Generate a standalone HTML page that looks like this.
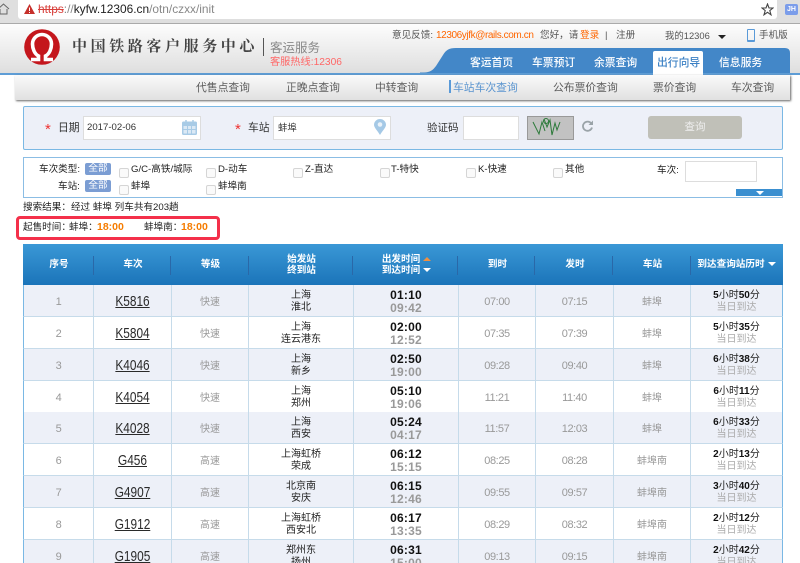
<!DOCTYPE html>
<html lang="zh"><head><meta charset="utf-8"><title>车站车次查询</title>
<style>
html,body{margin:0;padding:0;width:800px;height:563px;overflow:hidden;background:#fff}
body{position:relative;font-family:"Liberation Sans","Noto Sans CJK SC",sans-serif;font-size:10px;color:#333;filter:blur(.35px)}
.a,.t{position:absolute}
.t{white-space:nowrap;line-height:14px}
.nav{color:#fff;font-size:10.8px;font-weight:500;top:56px}
.sub{color:#5c5c5c;font-size:10.8px;top:81px}
.f{font-size:9.6px;color:#222}
.cb{position:absolute;width:8px;height:8px;border:1px solid #d5d5d5;border-radius:2px;background:#fafafa}
.badge{position:absolute;left:85px;width:26px;height:12px;line-height:12px;background:#7b9dd3;color:#fff;border-radius:2px;text-align:center;font-size:9.6px}
.th{position:absolute;top:244px;height:41px;display:flex;align-items:center;justify-content:center;text-align:center;color:#fff;font-weight:700;font-size:9.6px;line-height:11px}
.sep{position:absolute;top:256px;width:1px;height:19px;background:#2a68a8}
.tri{display:inline-block;width:0;height:0;border:4px solid transparent;border-top:4px solid #fff;border-bottom:0;vertical-align:1px;margin-left:3px}
.triu{display:inline-block;width:0;height:0;border:4px solid transparent;border-bottom:4px solid #f09040;border-top:0;vertical-align:1px;margin-left:3px}
.r{position:absolute;left:23px;width:760px;height:32px;box-sizing:border-box;border-left:1px solid #7ab8e4;border-right:1px solid #7ab8e4;border-bottom:1px solid #c6dbea;display:flex}
.r>div{box-sizing:border-box;border-right:1px solid #c6dbea;text-align:center;display:flex;flex-direction:column;justify-content:center;height:31px;padding-top:2px;color:#999;font-size:10px}
.r>div:last-child{border-right:0}
.r>.c3,.r>.c8{padding-top:0}
.o{background:#edf0f8}.e{background:#fff}
.c1{width:70px}.c2{width:78px}.c3{width:77px}.c4{width:105px}.c5{width:105px}.c6{width:77px}.c7{width:78px}.c8{width:77px}.c9{width:91px}
.r .n{font-size:11px;letter-spacing:-.4px}
.r .c2 span{display:inline-block;color:#2a2a2a;font-size:15px;text-decoration:underline;transform:scaleX(.79);line-height:16px}
.r .c4{color:#222;line-height:11.5px}
.r .c5{line-height:13px;font-size:12px;font-weight:700;color:#111;letter-spacing:.2px}
.r .c5 i{font-style:normal;color:#999}
.r .c9{color:#aaa;line-height:11.5px}
.r .c9 b{color:#111;font-weight:700}
.r .c9 u{text-decoration:none;font-weight:400;color:#222}
</style></head><body>

<!-- browser chrome -->
<div class="a" style="left:0;top:0;width:800px;height:23px;background:#dfdfdf;border-bottom:1px solid #aaa"></div>
<div class="a" style="left:18px;top:0;width:759px;height:19px;background:#fff;border-radius:0 0 3px 3px"></div>
<svg class="a" style="left:0;top:3px" width="10" height="12"><path d="M-2 6 L3.5 1 L9 6 M0 6 V11 H7 V6" fill="none" stroke="#666" stroke-width="1"/></svg>
<svg class="a" style="left:24px;top:4px" width="11" height="10"><path d="M5.5 0 L11 10 H0 Z" fill="#c6302b"/><rect x="5" y="3.5" width="1" height="3.5" fill="#fff"/><rect x="5" y="8" width="1" height="1" fill="#fff"/></svg>
<div class="t" style="left:38px;top:2px;font-size:11.9px;color:#888"><span style="color:#d8413c;text-decoration:line-through">https</span>://<span style="color:#222">kyfw.12306.cn</span>/otn/czxx/init</div>
<svg class="a" style="left:761px;top:3px" width="13" height="13"><path d="M6.5 1 L8 5 H12 L8.8 7.6 L10 11.8 L6.5 9.3 L3 11.8 L4.2 7.6 L1 5 H5 Z" fill="none" stroke="#444" stroke-width="1.1"/></svg>
<div class="a" style="left:785px;top:4px;width:13px;height:11px;background:#7b9dea;border-radius:2px;color:#fff;font-size:7px;font-weight:700;line-height:11px;text-align:center">JH</div>

<!-- site header -->
<div class="a" style="left:0;top:24px;width:800px;height:49px;background:linear-gradient(#fdfdfd,#dedede)"></div>
<div class="a" style="left:0;top:73px;width:800px;height:2px;background:#5e9dd6"></div>
<svg class="a" style="left:24px;top:29px" width="36" height="36" viewBox="0 0 36 36"><circle cx="18" cy="18" r="17.8" fill="#c4161c"/><path d="M7 30.5 H14.5 V27 C10.5 25 8.5 19.5 8.5 15 A9.5 9.5 0 0 1 27.5 15 C27.5 19.5 25.5 25 21.5 27 V30.5 H29" fill="none" stroke="#fff" stroke-width="3.6"/></svg>
<div class="t" style="left:72px;top:39px;font-size:15px;font-weight:700;letter-spacing:3.6px;color:#444;line-height:16px;font-family:'Liberation Serif','Noto Serif CJK SC',serif">中国铁路客户服务中心</div>
<div class="a" style="left:263px;top:38px;width:1px;height:18px;background:#555"></div>
<div class="t" style="left:270px;top:41px;font-size:12.5px;color:#888">客运服务</div>
<div class="t" style="left:270px;top:56px;font-size:10.2px;color:#f66">客服热线:12306</div>

<div class="t" style="left:392px;top:29px;font-size:9.6px;color:#555">意见反馈:</div>
<div class="t" style="left:436px;top:29px;font-size:10px;letter-spacing:-.4px;color:#f60">12306yjfk@rails.com.cn</div>
<div class="t" style="left:540px;top:29px;font-size:9.6px;color:#555">您好，请</div>
<div class="t" style="left:580px;top:29px;font-size:9.6px;color:#f60">登录</div>
<div class="t" style="left:605px;top:29px;font-size:9.6px;color:#555">|</div>
<div class="t" style="left:616px;top:29px;font-size:9.6px;color:#555">注册</div>
<div class="t" style="left:665px;top:29px;font-size:9.4px;color:#555">我的12306</div>
<div class="a" style="left:718px;top:35px;width:0;height:0;border:4px solid transparent;border-top:4px solid #222;border-bottom:0"></div>
<div class="a" style="left:747px;top:29px;width:6px;height:10px;border:1px solid #5a9ad8;border-bottom-width:2px;border-radius:1px"></div>
<div class="t" style="left:759px;top:29px;font-size:9.6px;color:#555">手机版</div>

<svg class="a" style="left:420px;top:48px" width="370" height="26"><path d="M0 24.5 H4 C10 24.5 13 22 16 18 L23 7 C26 2 29 0 36 0 H365 Q370 0 370 5 V25 H0 Z" fill="#4387c8"/></svg>
<div class="t nav" style="left:470px">客运首页</div>
<div class="t nav" style="left:532px">车票预订</div>
<div class="t nav" style="left:594px">余票查询</div>
<div class="a" style="left:653px;top:51px;width:50px;height:24px;background:#fff;border-radius:2px 2px 0 0"></div>
<div class="t nav" style="left:657px;color:#3b80c4">出行向导</div>
<div class="t nav" style="left:719px">信息服务</div>

<!-- sub nav -->
<div class="a" style="left:15px;top:75px;width:775px;height:25px;background:linear-gradient(#fafafa,#e0e0e0);box-shadow:1px 1px 2px #666"></div>
<div class="t sub" style="left:196px">代售点查询</div>
<div class="t sub" style="left:286px">正晚点查询</div>
<div class="t sub" style="left:375px">中转查询</div>
<div class="a" style="left:449px;top:80px;width:2px;height:13px;background:#5a9ad8"></div>
<div class="t sub" style="left:453px;color:#5a94cf">车站车次查询</div>
<div class="t sub" style="left:553px">公布票价查询</div>
<div class="t sub" style="left:653px">票价查询</div>
<div class="t sub" style="left:731px">车次查询</div>

<!-- search -->
<div class="a" style="left:23px;top:106px;width:758px;height:42px;background:#edf0f8;border:1px solid #7ab8e4;border-radius:2px"></div>
<div class="t" style="left:45px;top:123px;font-size:15px;color:#e33">*</div>
<div class="t" style="left:58px;top:121px;font-size:10.8px">日期</div>
<div class="a" style="left:83px;top:116px;width:116px;height:22px;background:#fff;border:1px solid #ddd"></div>
<div class="t" style="left:87px;top:121px;font-size:9.6px;color:#333">2017-02-06</div>
<svg class="a" style="left:182px;top:120px" width="15" height="15"><rect x="0" y="1.5" width="15" height="13.5" rx="1.5" fill="#a8cbe6"/><rect x="1.5" y="6" width="12" height="7.5" fill="#dbe9f5"/><path d="M5.5 6V13.5M9.5 6V13.5M1.5 9.5H13.5" stroke="#a8cbe6"/><path d="M4 0V3M11 0V3" stroke="#a8cbe6" stroke-width="1.5"/></svg>
<div class="t" style="left:235px;top:123px;font-size:15px;color:#e33">*</div>
<div class="t" style="left:248px;top:121px;font-size:10.8px">车站</div>
<div class="a" style="left:273px;top:116px;width:116px;height:22px;background:#fff;border:1px solid #ddd"></div>
<div class="t" style="left:278px;top:121px;font-size:9.4px;color:#333">蚌埠</div>
<svg class="a" style="left:374px;top:119px" width="12" height="16"><path d="M6 16 C3 11 0 8.5 0 5.8 A6 5.8 0 0 1 12 5.8 C12 8.5 9 11 6 16 Z" fill="#a5c9e6"/><circle cx="6" cy="5.5" r="2.3" fill="#eaf2f9"/></svg>
<div class="t" style="left:427px;top:121px;font-size:10.5px">验证码</div>
<div class="a" style="left:463px;top:116px;width:54px;height:22px;background:#fff;border:1px solid #ddd"></div>
<div class="a" style="left:527px;top:116px;width:45px;height:22px;background:#c2c2c2;border:1px solid #999"></div>
<svg class="a" style="left:531px;top:116px" width="32" height="22"><path d="M2 6 L8 18 L11 6 L14 15 M13 3 L16 11 L19 4 L21 19 L24 7 L26 14 L29 6" fill="none" stroke="#2c7a3a" stroke-width="1"/><circle cx="15" cy="5" r="2.5" fill="none" stroke="#2c7a3a"/></svg>
<svg class="a" style="left:581px;top:120px" width="13" height="13"><path d="M10.3 3.5 A4.6 4.6 0 1 0 11 7.5" fill="none" stroke="#9aa3a8" stroke-width="1.8"/><path d="M12 0.5 V5 H7.5 Z" fill="#9aa3a8"/></svg>
<div class="a" style="left:648px;top:116px;width:94px;height:23px;line-height:23px;background:#c0c0b8;border-radius:3px;color:#eee;text-align:center;font-size:10.5px">查询</div>

<!-- filter -->
<div class="a" style="left:23px;top:157px;width:758px;height:39px;background:#fff;border:1px solid #8bbde4"></div>
<div class="t f" style="left:39px;top:163px">车次类型:</div>
<div class="badge" style="top:163px">全部</div>
<div class="cb" style="left:119px;top:168px"></div><div class="t f" style="left:131px;top:163px">G/C-高铁/城际</div>
<div class="cb" style="left:206px;top:168px"></div><div class="t f" style="left:218px;top:163px">D-动车</div>
<div class="cb" style="left:293px;top:168px"></div><div class="t f" style="left:305px;top:163px">Z-直达</div>
<div class="cb" style="left:380px;top:168px"></div><div class="t f" style="left:391px;top:163px">T-特快</div>
<div class="cb" style="left:466px;top:168px"></div><div class="t f" style="left:478px;top:163px">K-快速</div>
<div class="cb" style="left:553px;top:168px"></div><div class="t f" style="left:565px;top:163px">其他</div>
<div class="t f" style="left:657px;top:164px">车次:</div>
<div class="a" style="left:685px;top:161px;width:70px;height:19px;background:#fff;border:1px solid #ddd"></div>
<div class="t f" style="left:58px;top:180px">车站:</div>
<div class="badge" style="top:180px">全部</div>
<div class="cb" style="left:119px;top:185px"></div><div class="t f" style="left:131px;top:180px">蚌埠</div>
<div class="cb" style="left:206px;top:185px"></div><div class="t f" style="left:218px;top:180px">蚌埠南</div>
<div class="a" style="left:736px;top:189px;width:46px;height:7px;background:#3a8fd0"></div>
<div class="a" style="left:756px;top:191px;width:0;height:0;border:4px solid transparent;border-top:4px solid #fff;border-bottom:0"></div>

<!-- result -->
<div class="t f" style="left:23px;top:201px">搜索结果：经过 蚌埠 列车共有203趟</div>
<div class="a" style="left:16px;top:216px;width:198px;height:18px;border:3px solid #f4304a;border-radius:4px"></div>
<div class="t f" style="left:23px;top:221px">起售时间：</div>
<div class="t f" style="left:69px;top:221px">蚌埠：</div>
<div class="t" style="left:97px;top:220px;font-size:10.5px;font-weight:700;color:#f57c00">18:00</div>
<div class="t f" style="left:144px;top:221px">蚌埠南：</div>
<div class="t" style="left:181px;top:220px;font-size:10.5px;font-weight:700;color:#f57c00">18:00</div>

<!-- table head -->
<div class="a" style="left:23px;top:244px;width:760px;height:41px;background:linear-gradient(#3a98d6,#1b74b9)"></div>
<div class="th" style="left:24px;width:70px">序号</div>
<div class="th" style="left:94px;width:78px">车次</div>
<div class="th" style="left:172px;width:77px">等级</div>
<div class="th" style="left:249px;width:105px"><div>始发站<br>终到站</div></div>
<div class="th" style="left:354px;width:105px"><div>出发时间<span class="triu"></span><br>到达时间<span class="tri"></span></div></div>
<div class="th" style="left:459px;width:77px">到时</div>
<div class="th" style="left:536px;width:78px">发时</div>
<div class="th" style="left:614px;width:77px">车站</div>
<div class="th" style="left:691px;width:91px"><div>到达查询站历时<span class="tri"></span></div></div>
<div class="sep" style="left:93px"></div><div class="sep" style="left:170px"></div><div class="sep" style="left:248px"></div><div class="sep" style="left:352px"></div><div class="sep" style="left:457px"></div><div class="sep" style="left:534px"></div><div class="sep" style="left:612px"></div><div class="sep" style="left:690px"></div>

<!-- rows -->
<div class="r o" style="top:285px"><div class="c1 n">1</div><div class="c2"><span>K5816</span></div><div class="c3">快速</div><div class="c4">上海<br>淮北</div><div class="c5">01:10<br><i>09:42</i></div><div class="c6 n">07:00</div><div class="c7 n">07:15</div><div class="c8">蚌埠</div><div class="c9"><span><b>5</b><u>小时</u><b>50</b><u>分</u></span><span>当日到达</span></div></div>
<div class="r e" style="top:317px"><div class="c1 n">2</div><div class="c2"><span>K5804</span></div><div class="c3">快速</div><div class="c4">上海<br>连云港东</div><div class="c5">02:00<br><i>12:52</i></div><div class="c6 n">07:35</div><div class="c7 n">07:39</div><div class="c8">蚌埠</div><div class="c9"><span><b>5</b><u>小时</u><b>35</b><u>分</u></span><span>当日到达</span></div></div>
<div class="r o" style="top:349px"><div class="c1 n">3</div><div class="c2"><span>K4046</span></div><div class="c3">快速</div><div class="c4">上海<br>新乡</div><div class="c5">02:50<br><i>19:00</i></div><div class="c6 n">09:28</div><div class="c7 n">09:40</div><div class="c8">蚌埠</div><div class="c9"><span><b>6</b><u>小时</u><b>38</b><u>分</u></span><span>当日到达</span></div></div>
<div class="r e" style="top:381px"><div class="c1 n">4</div><div class="c2"><span>K4054</span></div><div class="c3">快速</div><div class="c4">上海<br>郑州</div><div class="c5">05:10<br><i>19:06</i></div><div class="c6 n">11:21</div><div class="c7 n">11:40</div><div class="c8">蚌埠</div><div class="c9"><span><b>6</b><u>小时</u><b>11</b><u>分</u></span><span>当日到达</span></div></div>
<div class="r o" style="top:412px"><div class="c1 n">5</div><div class="c2"><span>K4028</span></div><div class="c3">快速</div><div class="c4">上海<br>西安</div><div class="c5">05:24<br><i>04:17</i></div><div class="c6 n">11:57</div><div class="c7 n">12:03</div><div class="c8">蚌埠</div><div class="c9"><span><b>6</b><u>小时</u><b>33</b><u>分</u></span><span>当日到达</span></div></div>
<div class="r e" style="top:444px"><div class="c1 n">6</div><div class="c2"><span>G456</span></div><div class="c3">高速</div><div class="c4">上海虹桥<br>荣成</div><div class="c5">06:12<br><i>15:15</i></div><div class="c6 n">08:25</div><div class="c7 n">08:28</div><div class="c8">蚌埠南</div><div class="c9"><span><b>2</b><u>小时</u><b>13</b><u>分</u></span><span>当日到达</span></div></div>
<div class="r o" style="top:476px"><div class="c1 n">7</div><div class="c2"><span>G4907</span></div><div class="c3">高速</div><div class="c4">北京南<br>安庆</div><div class="c5">06:15<br><i>12:46</i></div><div class="c6 n">09:55</div><div class="c7 n">09:57</div><div class="c8">蚌埠南</div><div class="c9"><span><b>3</b><u>小时</u><b>40</b><u>分</u></span><span>当日到达</span></div></div>
<div class="r e" style="top:508px"><div class="c1 n">8</div><div class="c2"><span>G1912</span></div><div class="c3">高速</div><div class="c4">上海虹桥<br>西安北</div><div class="c5">06:17<br><i>13:35</i></div><div class="c6 n">08:29</div><div class="c7 n">08:32</div><div class="c8">蚌埠南</div><div class="c9"><span><b>2</b><u>小时</u><b>12</b><u>分</u></span><span>当日到达</span></div></div>
<div class="r o" style="top:540px"><div class="c1 n">9</div><div class="c2"><span>G1905</span></div><div class="c3">高速</div><div class="c4">郑州东<br>扬州</div><div class="c5">06:31<br><i>15:00</i></div><div class="c6 n">09:13</div><div class="c7 n">09:15</div><div class="c8">蚌埠南</div><div class="c9"><span><b>2</b><u>小时</u><b>42</b><u>分</u></span><span>当日到达</span></div></div>

</body></html>
